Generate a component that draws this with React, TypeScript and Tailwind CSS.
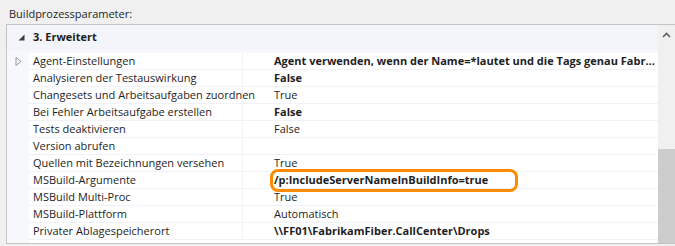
const rows: { name: string; value: string; bold?: boolean; expand?: boolean; highlight?: boolean }[] = [
  { name: 'Agent-Einstellungen', value: 'Agent verwenden, wenn der Name=*lautet und die Tags genau Fabr...', bold: true, expand: true },
  { name: 'Analysieren der Testauswirkung', value: 'False', bold: true },
  { name: 'Changesets und Arbeitsaufgaben zuordnen', value: 'True' },
  { name: 'Bei Fehler Arbeitsaufgabe erstellen', value: 'False', bold: true },
  { name: 'Tests deaktivieren', value: 'False' },
  { name: 'Version abrufen', value: '' },
  { name: 'Quellen mit Bezeichnungen versehen', value: 'True' },
  { name: 'MSBuild-Argumente', value: '/p:IncludeServerNameInBuildInfo=true', bold: true, highlight: true },
  { name: 'MSBuild Multi-Proc', value: 'True' },
  { name: 'MSBuild-Plattform', value: 'Automatisch' },
  { name: 'Privater Ablagespeicherort', value: '\\\\FF01\\FabrikamFiber.CallCenter\\Drops', bold: true },
];

function ScrollBar() {
  return (
    <div className="flex w-[17px] shrink-0 flex-col bg-[#f0f0f0]">
      <div className="flex h-[17px] items-center justify-center pt-[2px]">
        <svg width="9" height="6" viewBox="0 0 9 6">
          <path d="M1 5 L4.5 1.5 L8 5" stroke="#606060" strokeWidth="1.6" fill="none" />
        </svg>
      </div>
      <div className="h-[107px]" />
      <div className="flex-1 bg-[#cdcdcd]" />
    </div>
  );
}

export default function App() {
  return (
    <div
      className="h-[246px] w-[675px] overflow-hidden bg-[#f0f0f0] text-[11px] text-[#1e1e1e]"
      style={{ fontFamily: '"Open Sans", "Noto Sans", sans-serif' }}
    >
      <div className="h-[24px] pl-[9px] pt-[6px] leading-[16px]">Buildprozessparameter:</div>
      <div className="ml-[6px] flex h-[220px] border-l border-t border-b border-[#c4c4c4] bg-[#f7f8fb]">
        <div className="relative flex min-w-0 flex-1 flex-col">
          <div className="flex h-[25px] shrink-0 items-center bg-[#f3f5fa]">
            <div className="flex w-[26px] justify-center pl-[2px]">
              <svg width="7" height="7" viewBox="0 0 7 7">
                <path d="M6.5 0.5 L6.5 6.5 L0.5 6.5 Z" fill="#3c3c3c" />
              </svg>
            </div>
            <span className="font-bold">3. Erweitert</span>
          </div>
          <div className="h-[3px] shrink-0" />
          {rows.map((r) => (
            <div key={r.name} className="flex h-[17px] shrink-0 items-center">
              <div className="flex w-[22px] justify-center">
                {r.expand && (
                  <svg width="7" height="9" viewBox="0 0 7 9">
                    <path d="M1 0.5 L6 4.5 L1 8.5 Z" fill="none" stroke="#9a9a9a" strokeWidth="1" />
                  </svg>
                )}
              </div>
              <div className="flex h-full min-w-0 flex-1 border-b border-[#f0f2f7] bg-white">
                <div className="w-[214px] shrink-0 whitespace-nowrap border-r border-[#f0f2f7] pl-[4px] leading-[16px]">
                  {r.name}
                </div>
                <div
                  className={`min-w-0 flex-1 overflow-hidden whitespace-nowrap pl-[31px] leading-[16px] ${r.bold ? 'font-bold' : ''}`}
                >
                  {r.value}
                </div>
              </div>
            </div>
          ))}
          <div className="flex flex-1">
            <div className="w-[22px]" />
            <div className="flex-1 bg-white" />
          </div>
          <div className="pointer-events-none absolute left-[263px] top-[144px] h-[23px] w-[248px] rounded-[8px] border-[3px] border-[#ff8c00]" />
        </div>
        <ScrollBar />
      </div>
    </div>
  );
}
